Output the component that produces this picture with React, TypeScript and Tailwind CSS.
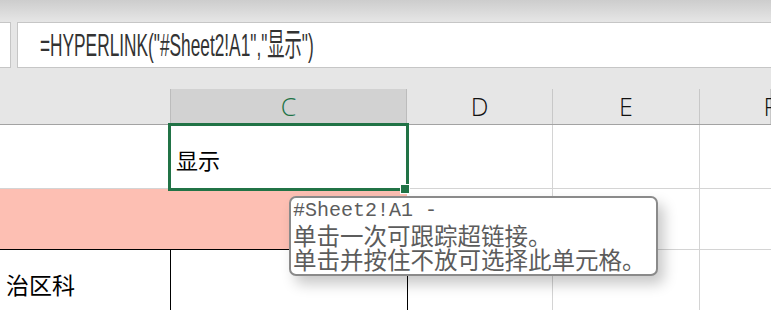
const cols = [
  { key: "B", w: "w-[170px]", label: "" },
  { key: "C", w: "w-[237px]", label: "C" },
  { key: "D", w: "w-[146px]", label: "D" },
  { key: "E", w: "w-[147px]", label: "E" },
  { key: "F", w: "flex-1", label: "F" },
];

export default function App() {
  return (
    <div className="relative w-[771px] h-[310px] overflow-hidden bg-[#e6e6e6] font-['Liberation_Sans','Noto_Sans_CJK_SC',sans-serif]">
      {/* ribbon edge */}
      <div className="h-[22px] bg-gradient-to-b from-[#cdcdcd] to-[#e6e6e6]" />

      {/* formula bar */}
      <div className="flex h-[46px] gap-[6px]">
        <div className="w-[11px] bg-white border-y border-r border-[#c6c6c6]" />
        <div className="flex-1 flex items-center bg-white border border-r-0 border-[#c6c6c6] pl-[22px] overflow-hidden">
          <span className="origin-left scale-x-[0.54] whitespace-nowrap text-[32px] leading-none text-[#333] font-['Liberation_Sans','Noto_Sans_CJK_SC',sans-serif]">
            =HYPERLINK("#Sheet2!A1","显示")
          </span>
        </div>
      </div>

      <div className="h-[21px]" />

      {/* column headers */}
      <div className="flex h-[36px] border-b border-[#a3a3a3]">
        {cols.map((c) => (
          <div
            key={c.key}
            className={`${c.w} flex items-center justify-center text-[25px] font-light font-['Open_Sans','Liberation_Sans',sans-serif] ${
              c.key === "C"
                ? "bg-[#d2d2d2] border-x border-[#bcbcbc] text-[#217346]"
                : c.key === "B"
                ? ""
                : "border-r border-[#c8c8c8] text-[#111]"
            } ${c.key === "F" ? "justify-end pr-0" : ""}`}
          >
            {c.key === "F" ? <span className="-mr-[6px]">F</span> : c.label}
          </div>
        ))}
      </div>

      {/* row 1 */}
      <div className="flex h-[64px] bg-white border-b border-[#d4d4d4]">
        <div className="w-[170px]" />
        <div className="w-[237px] flex items-center pl-[6px] pt-[6px] text-[22px] text-black font-['Noto_Sans_CJK_SC',sans-serif]">
          显示
        </div>
        <div className="w-[146px] border-r border-[#d4d4d4]" />
        <div className="w-[147px] border-r border-[#d4d4d4]" />
        <div className="flex-1" />
      </div>

      {/* row 2 */}
      <div className="flex h-[60px] bg-white">
        <div className="w-[407px] bg-[#fdbfb3]" />
        <div className="w-[146px] border-r border-[#d4d4d4]" />
        <div className="w-[147px] border-r border-[#d4d4d4]" />
        <div className="flex-1" />
      </div>

      {/* row 3 */}
      <div className="flex h-[61px] bg-white">
        <div className="w-[171px] border-t border-r border-black flex items-center pl-[6px] pt-[8px] text-[23px] text-black font-['Noto_Sans_CJK_SC',sans-serif]">
          治区科
        </div>
        <div className="w-[237px] border-t border-r border-black" />
        <div className="w-[145px] border-t border-r border-[#d4d4d4]" />
        <div className="w-[147px] border-t border-r border-[#d4d4d4]" />
        <div className="flex-1 border-t border-[#d4d4d4]" />
      </div>

      {/* active cell */}
      <div className="absolute left-[168px] top-[123px] w-[241px] h-[68px] border-[3px] border-[#217346]" />
      <div className="absolute left-[400px] top-[184px] w-[10px] h-[10px] bg-[#217346] border border-white" />

      {/* hyperlink tooltip */}
      <div className="absolute left-[289px] top-[196px] w-[369px] h-[80px] bg-white border-2 border-[#8a8a8a] rounded-[7px] shadow-[6px_8px_14px_rgba(0,0,0,0.22)] pl-[2px] pt-[1px] text-[#5c5c5c]">
        <div className="text-[20px] leading-[24px] font-['Liberation_Mono',monospace] whitespace-nowrap">
          #Sheet2!A1 -
        </div>
        <div className="text-[23.5px] leading-[24px] font-['Noto_Sans_CJK_SC',sans-serif] whitespace-nowrap">
          单击一次可跟踪超链接。
        </div>
        <div className="text-[23.5px] leading-[24px] font-['Noto_Sans_CJK_SC',sans-serif] whitespace-nowrap">
          单击并按住不放可选择此单元格。
        </div>
      </div>
    </div>
  );
}
